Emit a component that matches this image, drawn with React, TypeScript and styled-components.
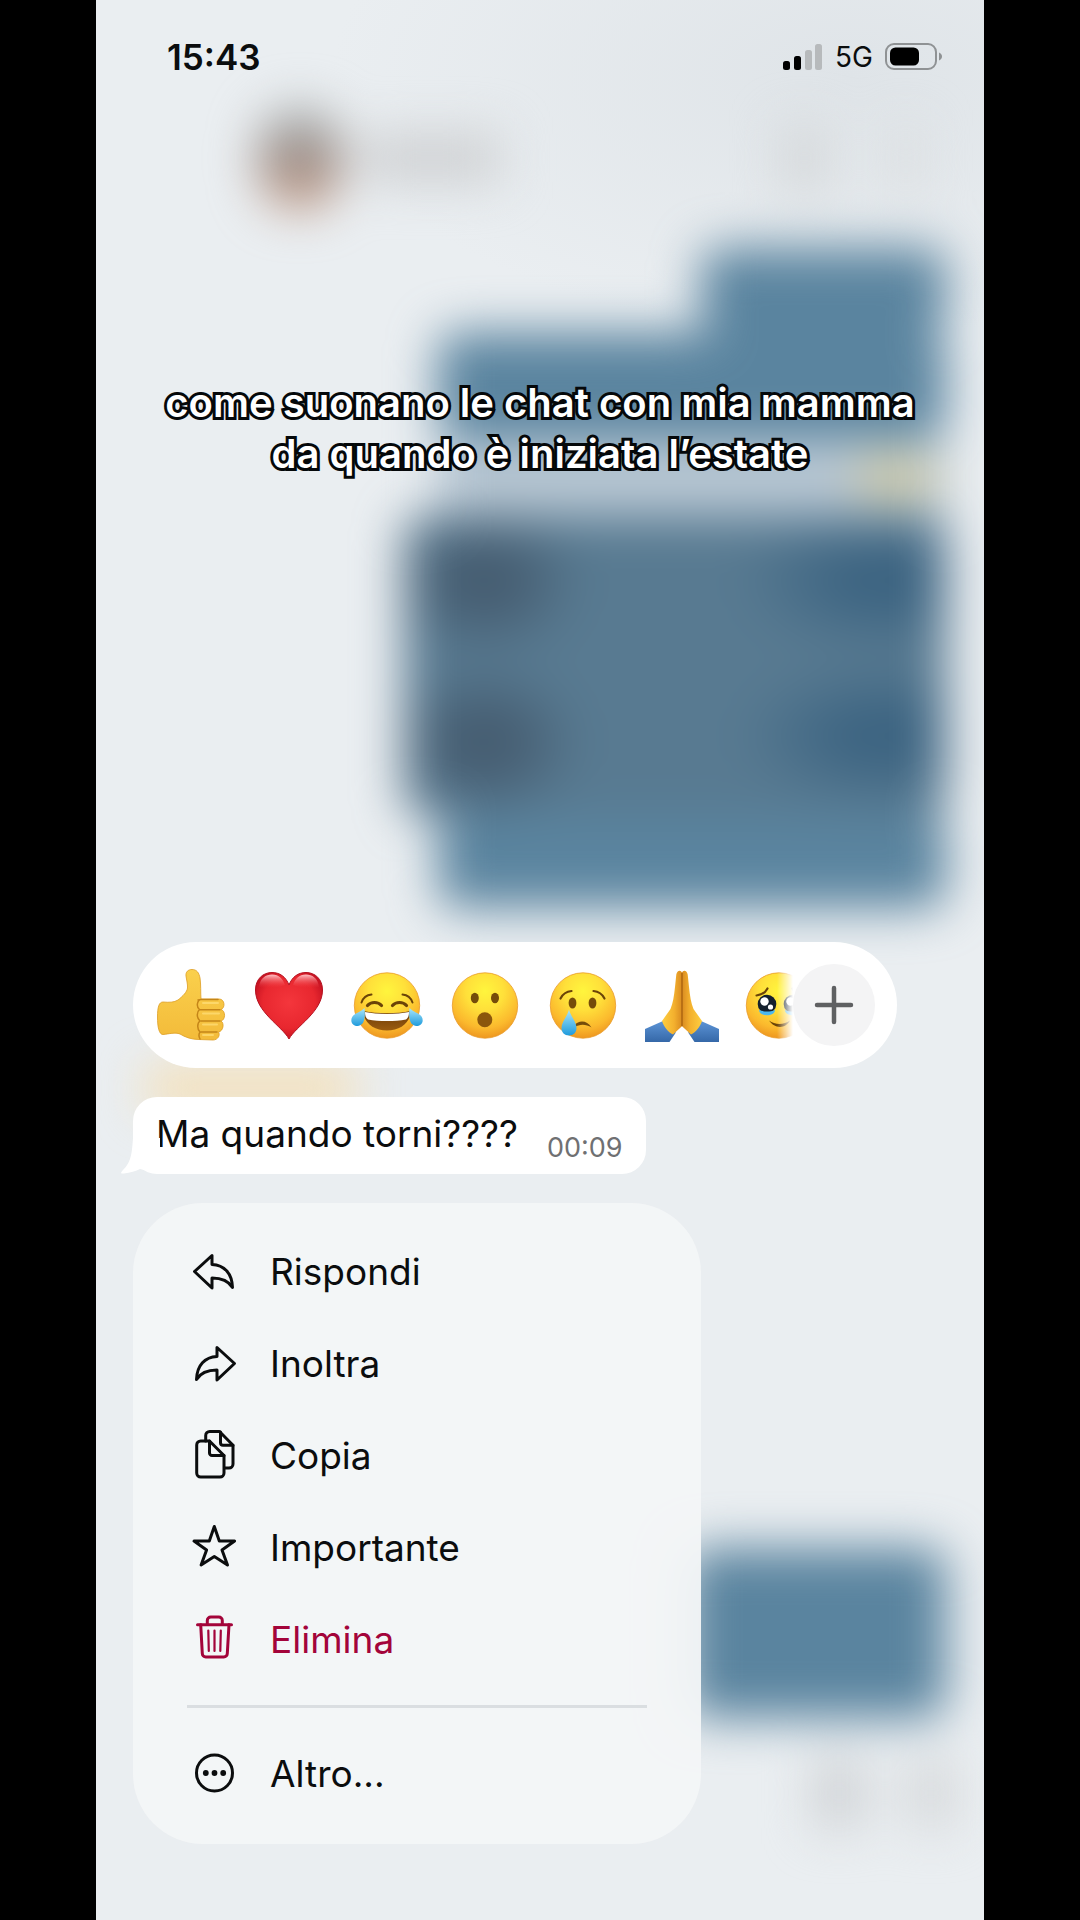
import React from "react";
import styled, { createGlobalStyle } from "styled-components";

const GlobalStyle = createGlobalStyle`
  *, *::before, *::after { box-sizing: border-box; }
  body {
    margin: 0;
    background: #000;
    color: #0b0d0e;
    font-family: Inter, "Liberation Sans", sans-serif;
  }
  button { font: inherit; color: inherit; border: 0; background: none; padding: 0; cursor: pointer; }
`;

/* ---------- shell ---------- */

const Phone = styled.main`
  position: relative;
  display: flex;
  flex-direction: column;
  max-width: 888px;
  min-height: 100vh;
  margin: 0 auto;
  overflow: hidden;
  background: #eaeef1;
`;

const Foreground = styled.div`
  position: relative;
  display: flex;
  flex-direction: column;
`;

/* ---------- blurred chat behind the menu ---------- */

const Backdrop = styled.div`
  position: absolute;
  inset: 0;
  display: flex;
  flex-direction: column;
  background: radial-gradient(ellipse 520px 260px at 85% 4%, #dfe4e8, #dfe4e800), #eaeef1;
`;

const Blurred = styled.div`
  display: flex;
  flex-direction: column;
  filter: blur(24px);
`;

const ChatHeader = styled.div`
  display: flex;
  align-items: center;
  gap: 22px;
  height: 248px;
  padding: 68px 64px 0 162px;
`;

const Avatar = styled.div`
  width: 84px;
  height: 104px;
  border-radius: 42px;
  background: linear-gradient(#aeb4b5 10%, #988a84 50%, #c29a85 85%);
`;

const NameBar = styled.div`
  width: 136px;
  height: 50px;
  background: #cfd1d3;
`;

const HeaderAction = styled.div<{ $push?: boolean }>`
  width: ${(p) => (p.$push ? 44 : 28)}px;
  height: 64px;
  margin-left: ${(p) => (p.$push ? "auto" : "44px")};
  background: ${(p) => (p.$push ? "#d4d7d9" : "#dadddf")};
`;

const Outgoing = styled.div<{ $w: number; $h: number; $fill?: string; $gap?: number }>`
  align-self: flex-end;
  width: ${(p) => p.$w}px;
  height: ${(p) => p.$h}px;
  margin: 0 38px ${(p) => p.$gap ?? 0}px 0;
  border-radius: 20px;
  background: ${(p) => p.$fill ?? "#5a849f"};
`;

const ReactionStrip = styled.div`
  align-self: flex-end;
  display: flex;
  justify-content: flex-end;
  width: 508px;
  height: 78px;
  margin-right: 38px;
  padding: 16px 12px;
  background: #b9c8d4;
`;

const Smudge = styled.div<{ $w: number; $h: number; $fill: string }>`
  width: ${(p) => p.$w}px;
  height: ${(p) => p.$h}px;
  background: ${(p) => p.$fill};
`;

const IncomingTrace = styled.div`
  height: 640px;
  padding: 160px 0 0 50px;
`;

const Composer = styled.div`
  display: flex;
  justify-content: flex-end;
  gap: 42px;
  padding: 40px 28px 0 0;
`;

const quoteFill =
  "radial-gradient(ellipse 100px 78px at 80px 64px, #455c70 30%, #455c7000)," +
  "radial-gradient(ellipse 100px 78px at 80px 226px, #455c70 30%, #455c7000)," +
  "radial-gradient(ellipse 150px 74px at 480px 64px, #3a6280 20%, #3a628000)," +
  "radial-gradient(ellipse 150px 74px at 480px 220px, #3a6280 20%, #3a628000), #587a91";

/* ---------- status bar ---------- */

const StatusBar = styled.header`
  display: flex;
  align-items: center;
  justify-content: space-between;
  height: 114px;
  padding: 0 41px 0 71px;
`;

const Clock = styled.time`
  font-size: 35px;
  line-height: 40px;
  font-weight: 600;
`;

const StatusIcons = styled.div`
  display: flex;
  align-items: center;
  gap: 12px;
  font-size: 28px;
  line-height: 32px;
`;

/* ---------- caption ---------- */

const Caption = styled.h1`
  margin: 263px 0 0;
  padding: 0 40px;
  text-align: center;
  font-size: 40px;
  line-height: 51px;
  font-weight: 600;
  color: #fff;
  -webkit-text-stroke: 6px #05080a;
  paint-order: stroke fill;
`;

/* ---------- reactions ---------- */

const Actions = styled.section`
  display: flex;
  flex-direction: column;
  align-items: flex-start;
  gap: 29px;
  margin-top: 463px;
  padding: 0 37px 76px;
`;

const ReactionBar = styled.div`
  display: flex;
  align-items: center;
  width: 764px;
  max-width: 100%;
  height: 126px;
  padding: 0 22px 0 18px;
  border-radius: 63px;
  background: #fff;
`;

const ReactionList = styled.div`
  display: flex;
  flex: 1;
  gap: 18px;
  min-width: 0;
  overflow: hidden;
  mask-image: linear-gradient(to left, transparent 0, #000 16px);
`;

const Reaction = styled.button`
  flex: 0 0 80px;
  height: 80px;
  svg { display: block; }
`;

const AddButton = styled.button`
  display: grid;
  place-items: center;
  flex: 0 0 82px;
  height: 82px;
  border-radius: 50%;
  background: #f4f4f5;
`;

/* ---------- message ---------- */

const Message = styled.article`
  position: relative;
  display: flex;
  align-items: flex-end;
  gap: 29px;
  height: 77px;
  padding: 0 23px 0 23px;
  border-radius: 24px;
  background: #fff;
`;

const MessageText = styled.p`
  margin: 0;
  padding-bottom: 17px;
  font-size: 37px;
  line-height: 46px;
`;

const MessageTime = styled.time`
  padding-bottom: 10px;
  font-size: 27px;
  line-height: 32px;
  color: #6f7072;
`;

const Tail = styled.svg`
  position: absolute;
  left: -13px;
  bottom: 0;
`;

/* ---------- menu ---------- */

const Menu = styled.nav`
  width: 568px;
  max-width: 100%;
  padding: 23px 54px 24px;
  border-radius: 70px;
  background: #f3f6f7f2;
`;

const MenuItem = styled.button<{ $danger?: boolean }>`
  display: flex;
  align-items: center;
  gap: 32px;
  width: 100%;
  height: 92px;
  padding: 0 3px;
  font-size: 37px;
  line-height: 46px;
  text-align: left;
  color: ${(p) => (p.$danger ? "#a3043a" : "#0b0d0e")};
`;

const Divider = styled.hr`
  height: 3px;
  margin: 19px 0 20px;
  border: 0;
  background: #dadee1;
`;

const Glyph = styled.svg`
  flex: none;
  width: 48px;
  height: 48px;
  overflow: visible;
  fill: none;
  stroke: currentColor;
  stroke-width: 3;
  stroke-linecap: round;
  stroke-linejoin: round;
`;

const ReplyIcon = () => (
  <Glyph viewBox="0 0 48 48" aria-hidden="true">
    <path d="M4.5 23.5 22 7.5V16.5C34 17 42 25 42.5 39.5C38 32 31 30 22 30V40Z" />
  </Glyph>
);
const ForwardIcon = () => (
  <Glyph viewBox="0 0 48 48" aria-hidden="true">
    <path d="M44.5 23.5 27 7.5V16.5C15 17 7 25 6.5 39.5C11 32 18 30 27 30V40Z" />
  </Glyph>
);
const CopyIcon = () => (
  <Glyph viewBox="0 0 48 48" aria-hidden="true">
    <path d="M10.7 9H19.5L34 23.5V41a4 4 0 0 1-4 4H10.7a4 4 0 0 1-4-4V13a4 4 0 0 1 4-4Z" />
    <path d="M19.5 9V21a2.5 2.5 0 0 0 2.5 2.5H34" />
    <path d="M15.7 9V3.5a4 4 0 0 1 4-4H29.5L43 13.3V32a4 4 0 0 1-4 4H34.5" />
    <path d="M30.5 0V10.8a2.5 2.5 0 0 0 2.5 2.5H43" />
  </Glyph>
);
const StarIcon = () => (
  <Glyph viewBox="0 0 48 48" aria-hidden="true">
    <path d="M24.3 2.5 29.3 17H44.6L32 26 37.5 41 24.3 32.5 11.100 41 16.600 26 4 17H19.300Z" />
  </Glyph>
);
const TrashIcon = () => (
  <Glyph viewBox="0 0 48 48" aria-hidden="true">
    <path d="M7.5 8.7H41.5M17.3 8.7V4.5A3.5 3.5 0 0 1 20.800 1H28.800A3.500 3.500 0 0 1 32.300 4.500V8.700" />
    <path d="M10.700 8.700 12.300 37.500A3.500 3.500 0 0 0 15.800 41H33.800A3.500 3.500 0 0 0 37.300 37.500L39 8.700" />
    <path strokeWidth="2.200" d="M18.300 14.500 18.800 35M24.500 14.500V35M30.800 14.500 30.300 35" />
  </Glyph>
);
const MoreIcon = () => (
  <Glyph viewBox="0 0 48 48" aria-hidden="true">
    <circle cx="24.500" cy="23" r="18" />
    <g fill="currentColor" stroke="none">
      <circle cx="15.800" cy="23" r="2.900" />
      <circle cx="24.500" cy="23" r="2.900" />
      <circle cx="33.200" cy="23" r="2.900" />
    </g>
  </Glyph>
);

/* ---------- emoji drawings ---------- */

const Defs = styled.svg`
  position: absolute;
`;

const EmojiDefs = () => (
  <Defs width="0" height="0" aria-hidden="true">
    <defs>
      <radialGradient id="face" cx=".5" cy=".28" r=".72">
        <stop offset="0" stopColor="#fff53d" />
        <stop offset=".4" stopColor="#ffe03a" />
        <stop offset=".78" stopColor="#fbb92d" />
        <stop offset="1" stopColor="#ee9720" />
      </radialGradient>
      <linearGradient id="skin" x1="0" y1="0" x2="0" y2="1">
        <stop offset="0" stopColor="#fad04c" />
        <stop offset="1" stopColor="#f3bb3a" />
      </linearGradient>
      <linearGradient id="palm" x1="0" y1="0" x2="1" y2="0">
        <stop offset="0" stopColor="#fdce40" />
        <stop offset=".6" stopColor="#f3b02e" />
        <stop offset="1" stopColor="#d98a20" />
      </linearGradient>
      <linearGradient id="sleeve" x1="0" y1="0" x2="0" y2="1">
        <stop offset="0" stopColor="#5c94d6" />
        <stop offset="1" stopColor="#3568a8" />
      </linearGradient>
      <radialGradient id="heart" cx=".5" cy=".45" r=".6">
        <stop offset="0" stopColor="#f4363c" />
        <stop offset=".65" stopColor="#e8272f" />
        <stop offset="1" stopColor="#bd0d1e" />
      </radialGradient>
      <linearGradient id="shine" x1="0" y1="0" x2="0" y2="1">
        <stop offset="0" stopColor="#ffc4c8" />
        <stop offset="1" stopColor="#f4363c" stopOpacity="0" />
      </linearGradient>
      <linearGradient id="tear" x1="0" y1="0" x2="0" y2="1">
        <stop offset="0" stopColor="#a9e6fb" />
        <stop offset="1" stopColor="#1f9bdc" />
      </linearGradient>
      <linearGradient id="grin" x1="0" y1="0" x2="0" y2="1">
        <stop offset="0" stopColor="#6b3a08" />
        <stop offset="1" stopColor="#9b5c10" />
      </linearGradient>
    </defs>
  </Defs>
);

const Emoji = ({ children }: { children: React.ReactNode }) => (
  <svg width="80" height="80" viewBox="0 0 80 80" aria-hidden="true">
    {children}
  </svg>
);
const Face = () => <circle cx="40" cy="40.500" r="32.700" fill="url(#face)" stroke="#e89a2a" strokeWidth=".8" />;
const INK = "#6b4408";

const ThumbsUp = () => (
  <Emoji>
    <path fill="url(#skin)" stroke="#dd9d22" strokeWidth=".8" d="M35 11C34.500 7 37 4.500 41 4.500C46 4.500 48 8 49 13C50 19 49.500 28 50 34L68 34C74 34 74.500 43 70 44.500C75 46 74.500 55 70 56C73.500 58 72.500 66 67.500 67C69.500 70 67 75 62 75L48 74.500C40 74.500 34 72 29 69C24 67 18 69 12 69.500C8 69.500 6.500 62 6.500 52C6.500 42 8 37 12 37C18 37.500 23 37.500 27 35C32 31 36 27 36.500 23C36.800 19 35.500 15 35 11Z" />
    <path fill="none" stroke="#c48518" strokeWidth="1.500" strokeLinecap="round" d="M50 34.500C46 35 45 42 48.500 44.500C45.500 47 45.500 53 49 56C46 58 46 64 49 67C47.500 69 48 72 49 74M49 44.700H69M50 56H69M50 67H66M47 35 50 34.500H67" />
    <path fill="none" stroke="#ffe07a" strokeWidth="2" strokeLinecap="round" opacity=".7" d="M52 38H67M52 48.500H68M52 59.500H66M52 70H62" />
  </Emoji>
);
const Heart = () => (
  <Emoji>
    <path fill="url(#heart)" stroke="#b3101f" strokeWidth="1" d="M40 74C33 61 6.500 47 6.500 25C6.500 14 14 7.500 23 7.500C31 7.500 37 12 40 20C43 12 49 7.500 57 7.500C66 7.500 73.500 14 73.500 25C73.500 47 47 61 40 74Z" />
    <path fill="url(#shine)" d="M10 22C11 13 17 9.500 23 9.500C30 9.500 34 14 36 20C28 23 18 24 10 22ZM70 22C69 13 63 9.500 57 9.500C50 9.500 46 14 44 20C52 23 62 24 70 22Z" />
  </Emoji>
);
const Joy = () => (
  <Emoji>
    <Face />
    <g fill="none" stroke={INK} strokeLinecap="round">
      <path strokeWidth="2" d="M14.500 37.500C16 33 19.500 30 24.500 29.500M65.500 37.500C64 33 60.500 30 55.500 29.500" />
      <path strokeWidth="3.200" d="M20.500 40.500C24 36.500 31 36.500 34.500 40.500M45.500 40.500C49 36.500 56 36.500 59.500 40.500" />
    </g>
    <path fill="url(#grin)" d="M16.500 46C30 49 50 49 63.500 46C63.500 58 53 65.500 40 65.500C27 65.500 16.500 58 16.500 46Z" />
    <path fill="#fff" d="M18 47C30 49.500 50 49.500 62 47C62 51 61 53 59 54.500C48 56.500 32 56.500 21 54.500C19 53 18 51 18 47Z" />
    <path fill="url(#tear)" d="M17.500 43C18.500 51 18 60 11 61C5.500 61.500 2.500 56 5.500 51.500C8 48 14 47 17.500 43ZM62.500 43C61.500 51 62 60 69 61C74.500 61.500 77.500 56 74.500 51.500C72 48 66 47 62.500 43Z" />
  </Emoji>
);
const Wow = () => (
  <Emoji>
    <Face />
    <g fill="#754c0a">
      <ellipse cx="29.800" cy="33" rx="4" ry="5.300" />
      <ellipse cx="50" cy="33" rx="4" ry="5.300" />
      <circle cx="39.800" cy="54.700" r="7.500" fill="#8b560c" />
    </g>
  </Emoji>
);
const Crying = () => (
  <Emoji>
    <Face />
    <g fill="#754c0a">
      <ellipse cx="29.500" cy="38" rx="3.900" ry="5.600" />
      <ellipse cx="49.500" cy="38" rx="3.900" ry="5.600" />
      <path d="M31.500 60C36 55 44 55 48.500 62.500C43 58.500 36 59 32 62Z" />
    </g>
    <path fill="none" stroke={INK} strokeWidth="2.200" strokeLinecap="round" d="M17.500 33.500C19.500 29.500 23 26.500 28.500 26M50.500 26C56 26.500 59.500 29.500 61.500 33.500" />
    <path fill="url(#tear)" d="M26 44.500C28 52 33.500 57 33.500 63C33.500 67.500 30.500 70.500 26 70.500C21.500 70.500 18.500 67.500 18.500 63C18.500 57 24 52 26 44.500Z" />
  </Emoji>
);
const PrayHalf = () => (
  <>
    <path fill="url(#sleeve)" d="M4 64 22 56C30 58 36 64 34.500 68L28.500 77H4Z" />
    <path fill="url(#palm)" d="M41.200 8C39.500 4 36 5.500 35.300 9.500L34 22C33 31 32 38 29.500 44L21 56C23 62 27 67 32 69.500L41.200 61Z" />
  </>
);
const Pray = () => (
  <Emoji>
    <PrayHalf />
    <g transform="translate(82 0) scale(-1 1)">
      <PrayHalf />
    </g>
    <path stroke="#a8600f" strokeWidth="1.300" d="M41 8V61" />
  </Emoji>
);
const HoldingTears = () => (
  <Emoji>
    <Face />
    <path fill="none" stroke={INK} strokeWidth="2.200" strokeLinecap="round" d="M17.500 30.500C22 30 26.500 27.500 28.500 23.500M53.500 23.500C55.500 27.500 60 30 64.500 30.500" />
    <circle cx="28" cy="39" r="9.300" fill="#14202e" />
    <circle cx="54" cy="39" r="9.300" fill="#14202e" />
    <path fill="#4db8ee" d="M20 45C25 47 31 47 36 45C36 52 20 52 20 45ZM46 45C51 47 57 47 62 45C62 52 46 52 46 45Z" />
    <g fill="#fff">
      <circle cx="25.500" cy="36.500" r="4.200" />
      <circle cx="31.500" cy="42" r="2.600" />
      <circle cx="51.500" cy="36.500" r="4.200" />
    </g>
    <path fill={INK} d="M30 55.500C36 60 45 60 51 55.500C47 63.500 36 64.500 30 55.500Z" />
  </Emoji>
);

const reactions = [
  { label: "Mi piace", Art: ThumbsUp },
  { label: "Cuore", Art: Heart },
  { label: "Risata", Art: Joy },
  { label: "Stupore", Art: Wow },
  { label: "Tristezza", Art: Crying },
  { label: "Grazie", Art: Pray },
  { label: "Commozione", Art: HoldingTears },
];

const menuItems = [
  { label: "Rispondi", Icon: ReplyIcon },
  { label: "Inoltra", Icon: ForwardIcon },
  { label: "Copia", Icon: CopyIcon },
  { label: "Importante", Icon: StarIcon },
  { label: "Elimina", Icon: TrashIcon, danger: true },
];

const ChatBackdrop = () => (
  <Backdrop aria-hidden="true">
    <Blurred>
      <ChatHeader>
        <Avatar />
        <NameBar />
        <HeaderAction $push />
        <HeaderAction />
      </ChatHeader>
      <Outgoing $w={245} $h={84} />
      <Outgoing $w={508} $h={106} />
      <ReactionStrip>
        <Smudge $w={76} $h={46} $fill="#cfcaa8" />
      </ReactionStrip>
      <Outgoing $w={542} $h={300} $fill={quoteFill} />
      <Outgoing $w={508} $h={92} />
      <IncomingTrace>
        <Smudge $w={210} $h={40} $fill="#f6deb0" />
      </IncomingTrace>
      <Outgoing $w={260} $h={170} />
      <Composer>
        <Smudge $w={50} $h={70} $fill="#cfd2d5" />
        <Smudge $w={50} $h={70} $fill="#d6d9db" />
      </Composer>
    </Blurred>
  </Backdrop>
);

export default function App() {
  return (
    <Phone>
      <GlobalStyle />
      <EmojiDefs />
      <ChatBackdrop />
      <Foreground>
        <StatusBar>
          <Clock>15:43</Clock>
          <StatusIcons>
            <svg width="40" height="28" viewBox="0 0 40 28" aria-hidden="true">
              <rect x="0" y="18" width="7" height="9" rx="2.500" />
              <rect x="11" y="13" width="7" height="14" rx="2.500" />
              <rect x="22" y="7" width="7" height="20" rx="2.500" fill="#b7babc" />
              <rect x="32" y="1" width="7" height="26" rx="2.500" fill="#b7babc" />
            </svg>
            <span>5G</span>
            <svg width="58" height="28" viewBox="0 0 58 28" aria-hidden="true">
              <rect x="1" y="1" width="50" height="25" rx="8" fill="none" stroke="#8f9294" strokeWidth="2" />
              <rect x="5" y="4.500" width="29" height="18" rx="5.500" />
              <path d="M54 9.500C58 11 58 16 54 17.500Z" fill="#8f9294" />
            </svg>
          </StatusIcons>
        </StatusBar>

        <Caption>
          come suonano le chat con mia mamma
          <br />
          da quando è iniziata l’estate
        </Caption>

        <Actions>
          <ReactionBar>
            <ReactionList>
              {reactions.map(({ label, Art }) => (
                <Reaction key={label} type="button" aria-label={label}>
                  <Art />
                </Reaction>
              ))}
            </ReactionList>
            <AddButton type="button" aria-label="Altre reazioni">
              <svg width="40" height="40" viewBox="0 0 40 40" aria-hidden="true">
                <path d="M20 3V37M3 20H37" stroke="#5f6062" strokeWidth="4.500" strokeLinecap="round" />
              </svg>
            </AddButton>
          </ReactionBar>

          <Message>
            <Tail width="40" height="36" viewBox="0 0 40 36" aria-hidden="true">
              <path fill="#fff" d="M13 0C12 12 12 24 3 32C0 35 1 36 4 35.500C10 35 16 33 20 31L40 36V0Z" />
            </Tail>
            <MessageText>Ma quando torni????</MessageText>
            <MessageTime>00:09</MessageTime>
          </Message>

          <Menu aria-label="Azioni messaggio">
            {menuItems.map(({ label, Icon, danger }) => (
              <MenuItem key={label} type="button" $danger={danger}>
                <Icon />
                {label}
              </MenuItem>
            ))}
            <Divider />
            <MenuItem type="button">
              <MoreIcon />
              Altro...
            </MenuItem>
          </Menu>
        </Actions>
      </Foreground>
    </Phone>
  );
}
